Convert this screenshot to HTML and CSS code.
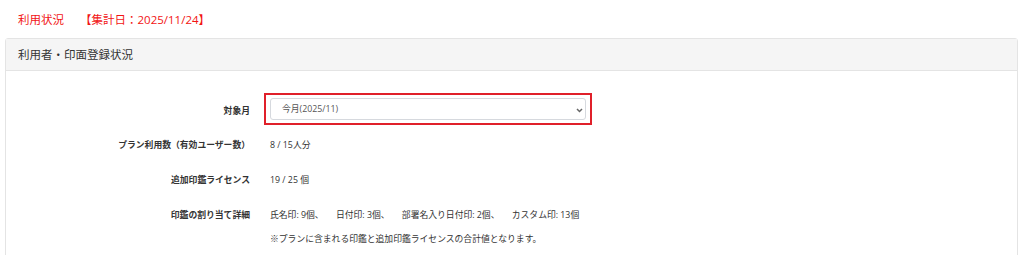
FILE: index.html
```html
<!DOCTYPE html>
<html lang="ja">
<head>
  <meta charset="UTF-8">
  <meta name="viewport" content="width=device-width, initial-scale=1">
  <title>利用状況</title>
  <link rel="stylesheet" href="styles.css">
</head>
<body>
  <div class="page">
    <!-- page title -->
    <h2 class="page-title">利用状況<span class="count-date">【集計日：2025/11/24】</span></h2>

    <!-- usage card -->
    <div class="card">
      <div class="card-header">利用者・印面登録状況</div>
      <div class="card-body">
        <div class="row row-select">
          <div class="label">対象月</div>
          <div class="value">
            <div class="select-wrap">
              <select class="month-select">
                <option>今月(2025/11)</option>
                <option>先月(2025/10)</option>
              </select>
              <svg class="chevron" width="7" height="5" viewBox="0 0 7 5">
                <path d="M1 1 L3.5 3.5 L6 1" fill="none" stroke="#666" stroke-width="1.5"/>
              </svg>
            </div>
          </div>
        </div>
        <div class="row">
          <div class="label">プラン利用数（有効ユーザー数）</div>
          <div class="value">8 / 15人分</div>
        </div>
        <div class="row">
          <div class="label">追加印鑑ライセンス</div>
          <div class="value">19 / 25 個</div>
        </div>
        <div class="row row-detail">
          <div class="label">印鑑の割り当て詳細</div>
          <div class="value">
            <span class="stamp">氏名印: 9個、</span>
            <span class="stamp">日付印: 3個、</span>
            <span class="stamp">部署名入り日付印: 2個、</span>
            <span class="stamp">カスタム印: 13個</span>
          </div>
        </div>
        <div class="row row-note">
          <div class="label"></div>
          <div class="value">※プランに含まれる印鑑と追加印鑑ライセンスの合計値となります。</div>
        </div>
      </div>
    </div>
  </div>
</body>
</html>
```

FILE: styles.css
```css
/* General Page Styling */
body {
  margin: 0;
  font-family: "Open Sans", "Noto Sans CJK JP", sans-serif;
  background-color: #fff;
  color: #333;
}
.page {
  padding: 0 6px 0 5px;
}
.page-title {
  margin: 0;
  padding: 11px 13px 9px;
  font-size: 11.5px;
  font-weight: normal;
  line-height: 18px;
  color: #f21414; /* red heading */
}
.count-date {
  margin-left: 16px;
}

/* Card */
.card {
  border: 1px solid #e4e4e4;
  border-radius: 3px 3px 0 0;
  height: 240px;
}
.card-header {
  background-color: #f5f5f5;
  border-bottom: 1px solid #e4e4e4;
  padding: 0 12px;
  height: 31px;
  line-height: 31px;
  font-size: 11.5px;
  color: #333;
}
.card-body {
  padding-top: 22px;
}
.row {
  display: flex;
  align-items: center;
  height: 20px;
  line-height: 20px;
  margin-bottom: 15px;
  font-size: 8.8px;
}
.row-select {
  height: 32px;
  margin-bottom: 10px;
}
.row-select .label {
  padding-top: 3px;
}
.row-detail {
  margin-bottom: 4px;
}
.label {
  width: 244px;
  flex: none;
  text-align: right;
  font-weight: bold;
  color: #333;
}
.value {
  margin-left: 20px;
  color: #333;
}
.stamp {
  margin-right: 10px;
}

/* Month select, highlighted in red */
.select-wrap {
  position: relative;
  display: flex;
  margin-left: -6px;
  padding: 3px 4px;
  border: 2px solid #e0202a;
}
.month-select {
  appearance: none;
  width: 316px;
  height: 22px;
  padding: 0 11px;
  font-family: "Open Sans", "Noto Sans CJK JP", sans-serif;
  font-size: 8.8px;
  color: #555;
  background-color: #fff;
  border: 1px solid #d6d9de;
  border-radius: 3px;
}
.chevron {
  position: absolute;
  right: 7px;
  top: 13px;
}
```
